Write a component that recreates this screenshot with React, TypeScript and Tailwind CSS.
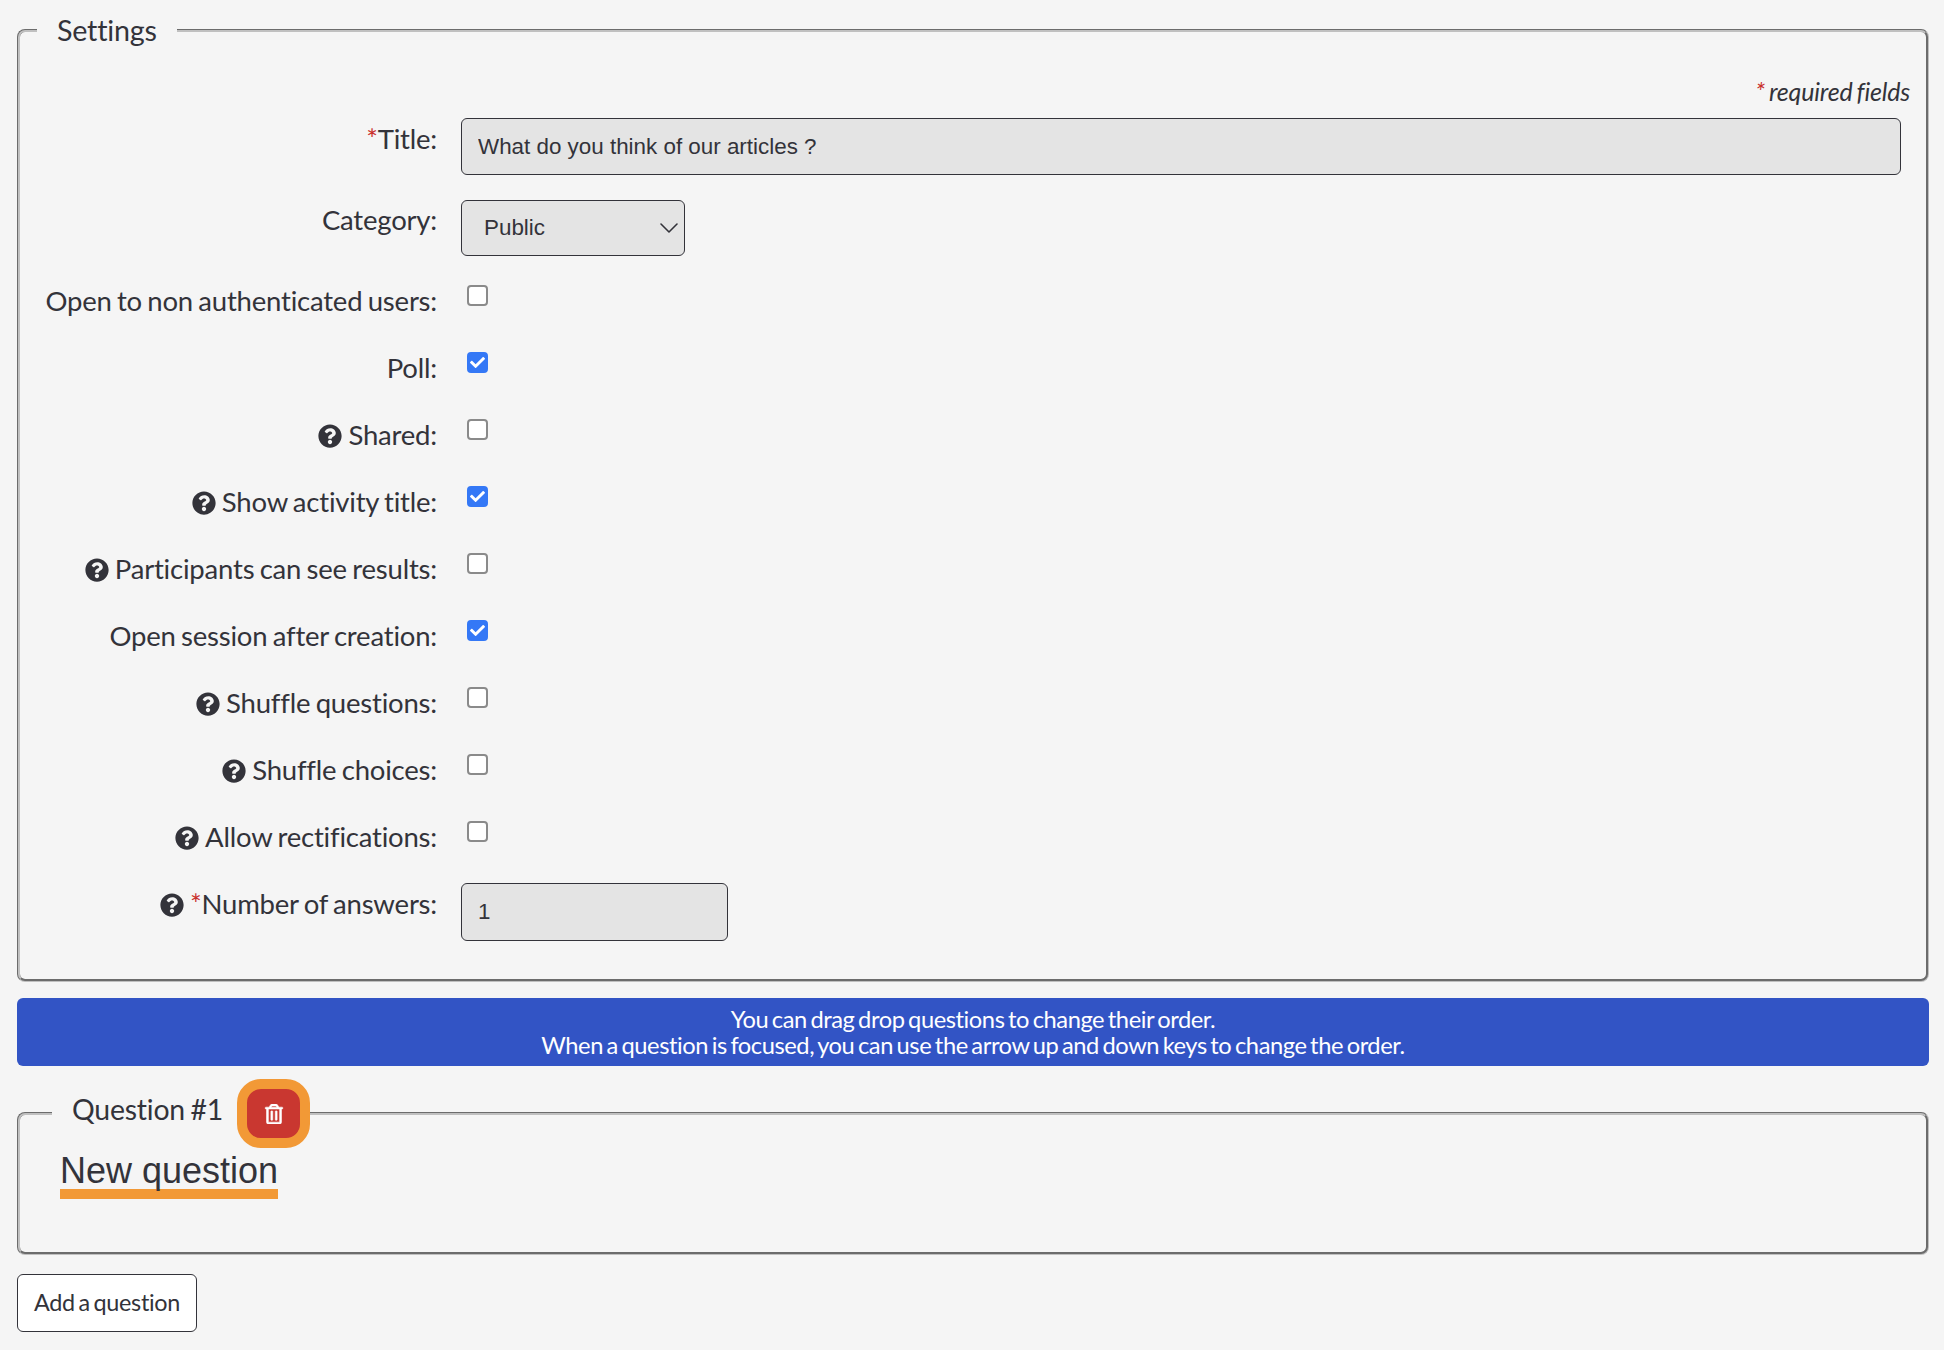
import { FaCheck, FaQuestionCircle, FaRegTrashAlt } from 'react-icons/fa'
import { ChevronDown } from 'lucide-react'

const CHECK_ROWS = [
  { label: 'Open to non authenticated users:', checked: false, help: false },
  { label: 'Poll:', checked: true, help: false },
  { label: 'Shared:', checked: false, help: true },
  { label: 'Show activity title:', checked: true, help: true },
  { label: 'Participants can see results:', checked: false, help: true },
  { label: 'Open session after creation:', checked: true, help: false },
  { label: 'Shuffle questions:', checked: false, help: true },
  { label: 'Shuffle choices:', checked: false, help: true },
  { label: 'Allow rectifications:', checked: false, help: true },
]

function Help() {
  return <FaQuestionCircle className="inline-block mr-[6px] text-[24px] align-[-3px]" />
}

function Star() {
  return <span className="text-[#c9302c]">*</span>
}

function Label({ children, className = 'pt-[2px]' }: { children: React.ReactNode; className?: string }) {
  return <div className={`w-[417px] shrink-0 text-right leading-9 ${className}`}>{children}</div>
}

function CheckRow({ label, checked, help }: { label: string; checked: boolean; help: boolean }) {
  return (
    <div className="flex h-[67px]">
      <Label>
        {help && <Help />}
        {label}
      </Label>
      <div className="ml-[30px] mt-1 h-[21px]">
        <div
          className={`flex h-[21px] w-[21px] items-center justify-center rounded-[4px] border-2 ${
            checked ? 'border-[#3478f6] bg-[#3478f6]' : 'border-[#8a8a8a] bg-white'
          }`}
        >
          {checked && <FaCheck className="text-[15px] text-white" />}
        </div>
      </div>
    </div>
  )
}

export default function App() {
  return (
    <div className="min-h-[1350px] bg-[#f5f5f5] pt-3 pl-[17px] pr-[15px] text-[27.5px] tracking-[-0.2px] text-[#33333a] [word-spacing:-1.5px] [font-family:Lato,sans-serif]">
      {/* Settings */}
      <fieldset className="h-[970px] rounded-lg border-[3px] border-[#c0c0c0] pr-[16px] [border-style:groove]">
        <legend className="ml-[17px] px-5 text-[28.7px] leading-9">Settings</legend>
        <div className="mt-[29px] text-right text-[25px] italic leading-7">
          <Star /> required fields
        </div>
        <div className="mt-[13px] flex h-[82px]">
          <Label className="pt-[3px]">
            <Star />
            Title:
          </Label>
          <input
            readOnly
            value="What do you think of our articles ?"
            className="ml-6 h-[57px] w-[1440px] rounded-md border border-[#33333a] bg-[#e4e4e4] px-4 text-[22.4px] tracking-normal [word-spacing:0] [font-family:'Liberation_Sans',sans-serif]"
          />
        </div>
        <div className="flex h-[81px]">
          <Label>Category:</Label>
          <div className="relative ml-6 h-[56px] w-[224px]">
            <div className="flex h-full items-center rounded-md border border-[#33333a] bg-[#e4e4e4] px-[22px] text-[22.4px] tracking-normal [font-family:'Liberation_Sans',sans-serif]">
              Public
            </div>
            <ChevronDown className="absolute right-0 top-3 h-8 w-8" strokeWidth={1.2} />
          </div>
        </div>
        {CHECK_ROWS.map((row) => (
          <CheckRow key={row.label} {...row} />
        ))}
        <div className="-mt-px flex">
          <Label className="pt-[3px]">
            <Help />
            <Star />
            Number of answers:
          </Label>
          <input
            readOnly
            value="1"
            className="ml-6 h-[58px] w-[267px] rounded-md border border-[#33333a] bg-[#e4e4e4] px-4 text-[22.4px] tracking-normal [font-family:'Liberation_Sans',sans-serif]"
          />
        </div>
      </fieldset>

      {/* Drag hint */}
      <div className="mt-4 flex h-[68px] flex-col items-center justify-center rounded-md bg-[#3254c5] text-[23.7px] leading-[26px] tracking-[-0.44px] text-white [word-spacing:-2px]">
        <div>You can drag drop questions to change their order.</div>
        <div>When a question is focused, you can use the arrow up and down keys to change the order.</div>
      </div>

      {/* Question */}
      <fieldset className="mt-[13px] h-[176px] rounded-lg border-[3px] border-[#c0c0c0] [border-style:groove]">
        <legend className="ml-[32px] flex items-center pl-[20px]">
          <span className="mb-[10px] text-[28.4px] leading-9">Question #1</span>
          <button className="ml-[14px] flex h-[69px] w-[73px] items-center justify-center rounded-[24px] border-[10px] border-[#f29936] bg-[#c93730] text-white">
            <FaRegTrashAlt className="stroke-current stroke-[14] text-[20px]" />
          </button>
        </legend>
        <div className="ml-[40px] mt-[5px] inline-block border-b-[10px] border-[#f29936] text-[36px] leading-[36px] tracking-normal [word-spacing:0] [font-family:'Liberation_Sans',sans-serif]">
          New question
        </div>
      </fieldset>

      <button className="mt-[19px] h-[58px] w-[180px] rounded-md border border-[#33333a] bg-white pb-px text-[23.4px] tracking-[-0.3px] [word-spacing:-2px]">
        Add a question
      </button>
    </div>
  )
}
